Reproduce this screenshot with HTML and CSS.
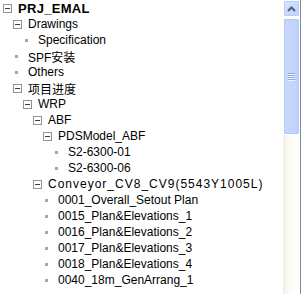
FILE: index.html
```html
<!DOCTYPE html>
<html lang="zh">
<head>
    <meta charset="UTF-8">
    <title>PRJ_EMAL</title>
    <link rel="stylesheet" href="styles.css">
</head>
<body>
    <div class="frame">
        <div class="tree">
            <div class="row l0 root"><span class="box"></span><span class="label">PRJ_EMAL</span></div>
            <div class="row l1"><span class="box"></span><span class="label">Drawings</span></div>
            <div class="row l2"><span class="dot"></span><span class="label">Specification</span></div>
            <div class="row l1"><span class="dot"></span><span class="label">SPF安装</span></div>
            <div class="row l1"><span class="dot"></span><span class="label">Others</span></div>
            <div class="row l1"><span class="box"></span><span class="label">项目进度</span></div>
            <div class="row l2"><span class="box"></span><span class="label">WRP</span></div>
            <div class="row l3"><span class="box"></span><span class="label">ABF</span></div>
            <div class="row l4"><span class="box"></span><span class="label">PDSModel_ABF</span></div>
            <div class="row l5"><span class="dot"></span><span class="label">S2-6300-01</span></div>
            <div class="row l5"><span class="dot"></span><span class="label">S2-6300-06</span></div>
            <div class="row l3"><span class="box"></span><span class="label wide">Conveyor_CV8_CV9(5543Y1005L)</span></div>
            <div class="row l4"><span class="dot"></span><span class="label">0001_Overall_Setout Plan</span></div>
            <div class="row l4"><span class="dot"></span><span class="label">0015_Plan&amp;Elevations_1</span></div>
            <div class="row l4"><span class="dot"></span><span class="label">0016_Plan&amp;Elevations_2</span></div>
            <div class="row l4"><span class="dot"></span><span class="label">0017_Plan&amp;Elevations_3</span></div>
            <div class="row l4"><span class="dot"></span><span class="label">0018_Plan&amp;Elevations_4</span></div>
            <div class="row l4"><span class="dot"></span><span class="label">0040_18m_GenArrang_1</span></div>
        </div>

        <div class="scrollbar">
            <div class="sb-btn">
                <svg width="9" height="6" viewBox="0 0 9 6">
                    <path d="M1 5 L4.5 1.5 L8 5" fill="none" stroke="#4d6185" stroke-width="2"/>
                </svg>
            </div>
            <div class="sb-thumb">
                <span class="grip"></span>
                <span class="grip"></span>
                <span class="grip"></span>
                <span class="grip"></span>
            </div>
            <div class="sb-track"></div>
        </div>
        <div class="edge"></div>
    </div>
</body>
</html>
```

FILE: styles.css
```css
* {
    margin: 0;
    padding: 0;
    box-sizing: border-box;
}

body {
    width: 303px;
    height: 294px;
    overflow: hidden;
    background: #fff;
    font-family: 'Liberation Sans', 'Noto Sans CJK SC', sans-serif;
    font-size: 12px;
    color: #000;
}

.frame {
    display: flex;
    height: 294px;
}

.tree {
    flex: 1;
    overflow: hidden;
}

.row {
    display: flex;
    align-items: center;
    height: 16px;
    white-space: nowrap;
}

.l1 { padding-left: 10px; }
.l2 { padding-left: 20px; }
.l3 { padding-left: 30px; }
.l4 { padding-left: 40px; }
.l5 { padding-left: 50px; }

.box {
    position: relative;
    flex: none;
    width: 9px;
    height: 9px;
    margin: 0 6px 0 3px;
    border: 1px solid #939393;
    background: #fff;
}

.box::after {
    content: '';
    position: absolute;
    left: 1px;
    top: 3px;
    width: 5px;
    height: 1px;
    background: #3c3c3c;
}

.dot {
    flex: none;
    width: 3px;
    height: 3px;
    margin: 0 10px 0 5px;
    background: #a8a8a8;
}

.root .label {
    font-weight: bold;
    font-size: 13px;
    letter-spacing: 0.3px;
}

.label.wide {
    letter-spacing: 1px;
}

.scrollbar {
    flex: none;
    width: 17px;
    display: flex;
    flex-direction: column;
}

.sb-btn {
    height: 17px;
    display: flex;
    align-items: center;
    justify-content: center;
    border: 1px solid #fff;
    border-radius: 2px;
    background: linear-gradient(135deg, #dbe6fe, #bccffb);
    box-shadow: inset 0 0 0 1px #b9cdf8;
}

.sb-thumb {
    height: 117px;
    margin-top: 1px;
    display: flex;
    flex-direction: column;
    align-items: center;
    justify-content: center;
    gap: 1px;
    border: 1px solid #fff;
    border-radius: 2px;
    background: linear-gradient(90deg, #c9d8fd, #bfd1fb);
    box-shadow: inset 0 0 0 1px #b4c8f6;
}

.grip {
    width: 7px;
    height: 1px;
    background: #8fa8e4;
    box-shadow: 0 1px 0 #eef3ff;
}

.sb-track {
    flex: 1;
    background: linear-gradient(90deg, #f1efe2, #fdfdf8 40%, #fefefb);
}

.edge {
    flex: none;
    width: 3px;
    border-left: 1px solid #7f8a99;
    background: #fff;
}
```
